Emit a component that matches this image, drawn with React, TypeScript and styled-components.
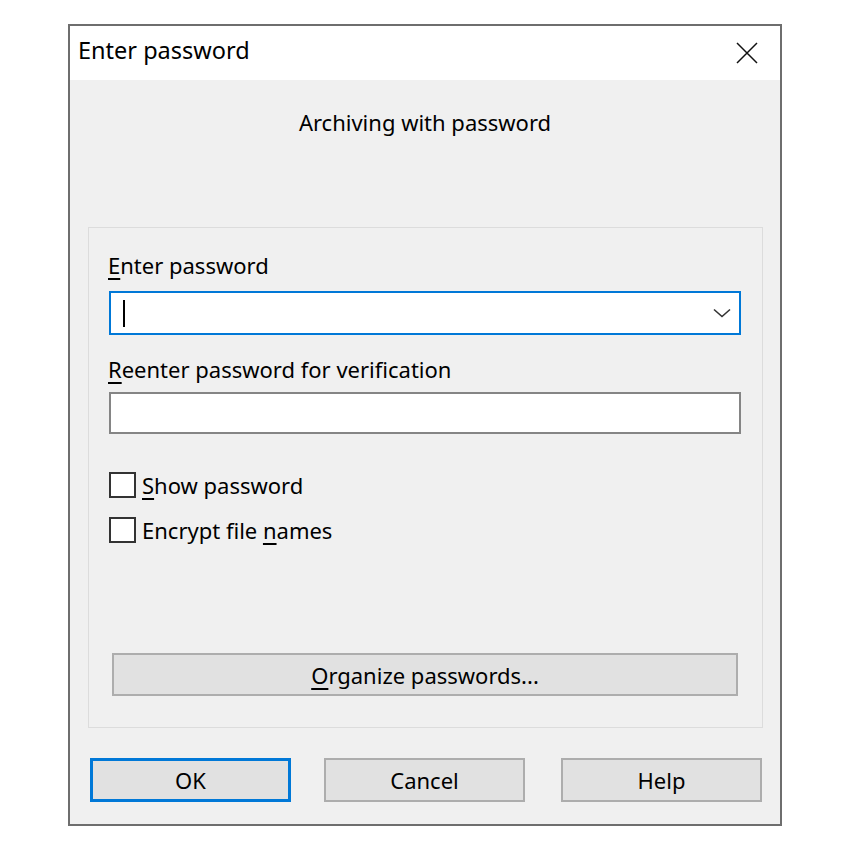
import React from "react";
import styled, { createGlobalStyle } from "styled-components";

const GlobalStyle = createGlobalStyle`
  html, body {
    margin: 0;
    padding: 0;
    background: #ffffff;
  }
  body {
    font-family: "Noto Sans", "Open Sans", "DejaVu Sans", sans-serif;
    font-size: 22px;
    color: #000000;
  }
`;

function App(): JSX.Element {
  return (
    <>
      <GlobalStyle />
      <Page>
        <Window>
          <TitleBar>
            <Title>Enter password</Title>
            <CloseButton aria-label="Close">
              <svg width="22" height="22" viewBox="0 0 22 22">
                <path d="M1 1 L21 21 M21 1 L1 21" stroke="#111" strokeWidth="1.5" fill="none" />
              </svg>
            </CloseButton>
          </TitleBar>

          <Body>
            <Heading>Archiving with password</Heading>

            <GroupBox>
              <FieldLabel>
                <u>E</u>nter password
              </FieldLabel>
              <ComboBox>
                <Caret />
                <svg width="18" height="10" viewBox="0 0 18 10">
                  <path d="M1 1.5 L9 8.5 L17 1.5" stroke="#333" strokeWidth="1.6" fill="none" />
                </svg>
              </ComboBox>

              <FieldLabel $gap={19}>
                <u>R</u>eenter password for verification
              </FieldLabel>
              <TextBox />

              <CheckRow $gap={36}>
                <CheckBox />
                <span>
                  <u>S</u>how password
                </span>
              </CheckRow>
              <CheckRow $gap={15}>
                <CheckBox />
                <span>
                  Encrypt file <u>n</u>ames
                </span>
              </CheckRow>

              <WideButton>
                <u>O</u>rganize passwords...
              </WideButton>
            </GroupBox>

            <ButtonRow>
              <DialogButton $focused>OK</DialogButton>
              <DialogButton $gap={33}>Cancel</DialogButton>
              <DialogButton $gap={36}>Help</DialogButton>
            </ButtonRow>
          </Body>
        </Window>
      </Page>
    </>
  );
}

const Page = styled.div`
  padding: 24px 0 0 68px;
`;

const Window = styled.div`
  width: 714px;
  border: 2px solid #6e6e6e;
  box-sizing: border-box;
  background: #f0f0f0;

  u {
    text-decoration: underline;
    text-decoration-thickness: 1.5px;
    text-underline-offset: 4px;
  }
`;

const TitleBar = styled.div`
  height: 54px;
  background: #ffffff;
  display: flex;
  align-items: flex-start;
  justify-content: space-between;
  padding: 8px 22px 0 8px;
  box-sizing: border-box;
`;

const Title = styled.div`
  font-size: 23.5px;
  line-height: 32px;
`;

const CloseButton = styled.div`
  display: flex;
  margin-top: 8px;
`;

const Body = styled.div`
  padding: 27px 0 22px 0;
`;

const Heading = styled.div`
  line-height: 30px;
  text-align: center;
`;

const GroupBox = styled.div`
  margin: 90px 17px 0 18px;
  border: 1px solid #dcdcdc;
  padding: 22px 0 31px 0;
`;

const FieldLabel = styled.div<{ $gap?: number }>`
  line-height: 30px;
  padding-left: 19px;
  margin-top: ${(p) => p.$gap ?? 0}px;
`;

const ComboBox = styled.div`
  margin: 11px 21px 0 20px;
  height: 44px;
  box-sizing: border-box;
  border: 2px solid #0078d7;
  background: #ffffff;
  display: flex;
  align-items: center;
  justify-content: space-between;
  padding: 0 8px 0 12px;
`;

const Caret = styled.span`
  width: 2px;
  height: 27px;
  background: #000000;
`;

const TextBox = styled.div`
  margin: 8px 21px 0 20px;
  height: 42px;
  box-sizing: border-box;
  border: 2px solid #858585;
  background: #ffffff;
`;

const CheckRow = styled.div<{ $gap: number }>`
  display: flex;
  align-items: center;
  gap: 6px;
  height: 30px;
  line-height: 30px;
  margin: ${(p) => p.$gap}px 0 0 20px;
`;

const CheckBox = styled.span`
  width: 27px;
  height: 26px;
  box-sizing: border-box;
  border: 2px solid #333333;
  background: #ffffff;
`;

const WideButton = styled.div`
  margin: 108px 24px 0 23px;
  height: 43px;
  box-sizing: border-box;
  border: 2px solid #adadad;
  background: #e1e1e1;
  display: flex;
  align-items: center;
  justify-content: center;
  padding-top: 1px;
`;

const ButtonRow = styled.div`
  margin-top: 30px;
  padding: 0 18px 0 20px;
  display: flex;
`;

const DialogButton = styled.div<{ $focused?: boolean; $gap?: number }>`
  width: 201px;
  height: 44px;
  margin-left: ${(p) => p.$gap ?? 0}px;
  box-sizing: border-box;
  border: ${(p) => (p.$focused ? "3px solid #0078d7" : "2px solid #adadad")};
  background: #e1e1e1;
  display: flex;
  align-items: center;
  justify-content: center;
`;

export default App;
